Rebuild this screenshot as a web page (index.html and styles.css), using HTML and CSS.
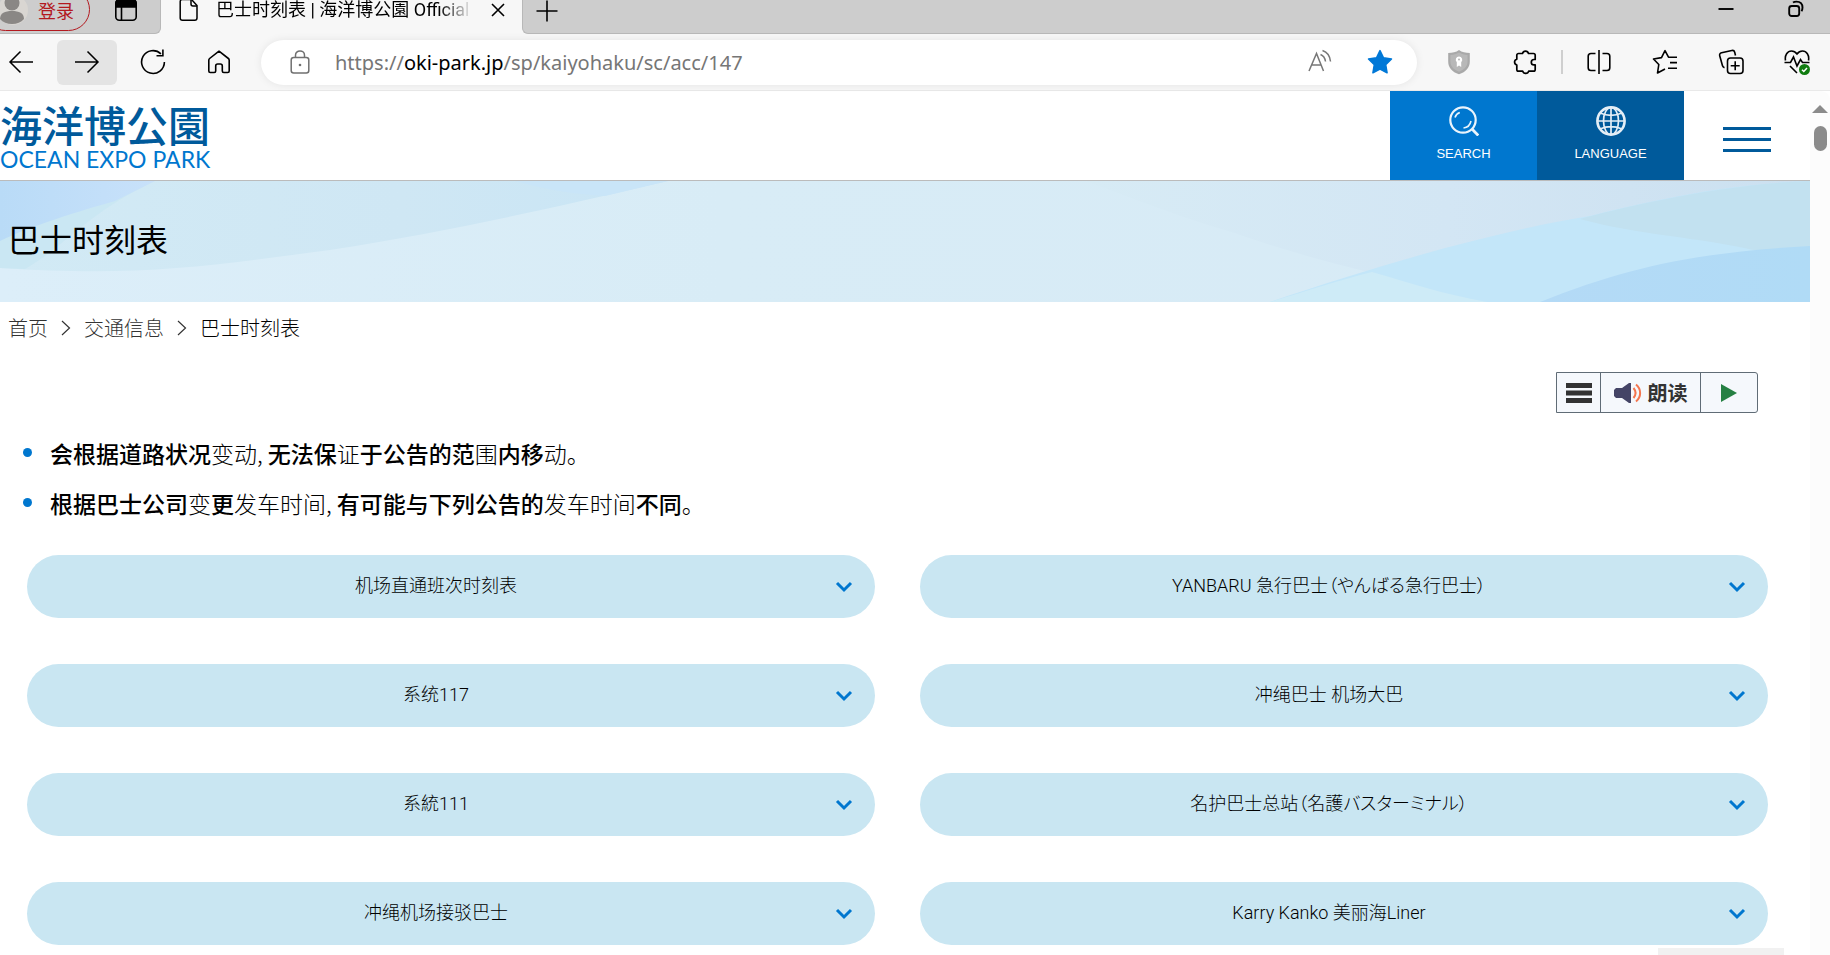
FILE: index.html
```html
<!DOCTYPE html>
<html lang="zh-CN">
<head>
<meta charset="utf-8">
<meta name="viewport" content="width=device-width, initial-scale=1">
<title>巴士时刻表 | 海洋博公園 Official Site</title>
<link rel="stylesheet" href="styles.css">
</head>
<body>
<div class="window">
  <div class="tabstrip">
    <div class="strip-left">
      <button class="profile" type="button">
        <svg class="avatar" viewBox="0 0 30 30" aria-hidden="true"><circle cx="15" cy="15" r="15" fill="#d9d6d2"/><circle cx="14" cy="8" r="7.500" fill="#8a8785"/><path d="M2 24c0-6 5-8 12-8s12 2 12 8c-3 3.500-7 5-12 5s-9-1.500-12-5z" fill="#8a8785"/></svg>
        <span>登录</span>
      </button>
      <button class="icon-btn workspaces" type="button" aria-label="工作区">
        <svg width="24" height="24" viewBox="0 0 24 24" fill="none" stroke="#000" stroke-width="1.600"><rect x="1.800" y="1.800" width="20.400" height="20.400" rx="3.500"/><path d="M2 9V5a3 3 0 0 1 3-3h14a3 3 0 0 1 3 3v4z" fill="#000"/><path d="M7.500 9v13"/></svg>
      </button>
    </div>
    <div class="tab">
      <svg class="doc" width="20" height="24" viewBox="0 0 20 24" fill="none" stroke="#000" stroke-width="1.500"><path d="M4 1.500h8.500l5.500 6V20a2.300 2.300 0 0 1-2.300 2.300H3.500A2.300 2.300 0 0 1 1.200 20V3.500a2 2 0 0 1 2-2z"/><path d="M12 1.500V6a2 2 0 0 0 2 2h4"/></svg>
      <span class="tab-title">巴士时刻表 | 海洋博公園 Official Site</span>
      <button class="icon-btn tab-close" type="button" aria-label="关闭标签页"><svg width="14" height="14" viewBox="0 0 14 14" stroke="#000" stroke-width="1.600"><path d="M1 1l12 12M13 1L1 13"/></svg></button>
    </div>
    <div class="strip-right">
      <button class="icon-btn" type="button" aria-label="新建标签页"><svg width="22" height="22" viewBox="0 0 22 22" stroke="#000" stroke-width="1.600"><path d="M11 0.500v21M0.500 11h21"/></svg></button>
      <div class="controls">
        <button class="icon-btn" type="button" aria-label="最小化"><svg width="16" height="18" viewBox="0 0 16 18" stroke="#000" stroke-width="1.900"><path d="M0.500 9h15"/></svg></button>
        <button class="icon-btn" type="button" aria-label="还原"><svg width="16" height="18" viewBox="0 0 16 18" fill="none" stroke="#000" stroke-width="1.900"><rect x="1.200" y="6" width="10" height="10" rx="2.500"/><path d="M5 2.500C6 1.800 7 1.600 8.500 1.600c4 0 6 2.400 6 6 0 1.500-.3 2.600-1 3.600"/></svg></button>
      </div>
    </div>
  </div>

  <div class="toolbar">
    <div class="nav">
      <button class="icon-btn tool" type="button" aria-label="后退"><svg width="26" height="24" viewBox="0 0 26 24" fill="none" stroke="#000" stroke-width="1.500"><path d="M25 12H2M12.500 1.500L2 12l10.500 10.500"/></svg></button>
      <button class="icon-btn tool active" type="button" aria-label="前进"><svg width="26" height="24" viewBox="0 0 26 24" fill="none" stroke="#000" stroke-width="1.500"><path d="M1 12h23M13.500 1.500L24 12 13.500 22.500"/></svg></button>
      <button class="icon-btn tool" type="button" aria-label="刷新"><svg width="26" height="26" viewBox="0 0 26 26" fill="none" stroke="#000" stroke-width="1.600"><path d="M24.400 13a11.400 11.400 0 1 1-3.500-8.200M16.500 6.700h6.400V.5"/></svg></button>
      <button class="icon-btn tool" type="button" aria-label="主页"><svg width="24" height="24" viewBox="0 0 24 24" fill="none" stroke="#000" stroke-width="1.600" stroke-linejoin="round"><path d="M1.800 10.200c0-.7.300-1.300.8-1.700L12 1.200l9.400 7.300c.5.400.8 1 .8 1.700V21c0 .9-.6 1.500-1.500 1.500h-3.900c-.9 0-1.500-.6-1.500-1.500v-5c0-1.300-1-2-2-2h-2.600c-1 0-2 .7-2 2v5c0 .9-.6 1.500-1.500 1.500H3.300c-.9 0-1.500-.6-1.500-1.500z"/></svg></button>
    </div>
    <div class="address">
      <svg class="lock" width="20" height="24" viewBox="0 0 20 24" fill="none" stroke="#707070" stroke-width="1.500"><rect x="1.200" y="7.500" width="17.600" height="15.500" rx="2.500"/><path d="M5.500 7.500V5.200C5.500 2.700 7.500 1 10 1s4.500 1.700 4.500 4.200v2.300"/><circle cx="10" cy="15" r="1.300" fill="#707070" stroke="none"/></svg>
      <a class="url" href="#">https://<b>oki-park.jp</b>/sp/kaiyohaku/sc/acc/147</a>
      <button class="icon-btn" type="button" aria-label="大声朗读"><svg width="26" height="26" viewBox="0 0 26 26" fill="none" stroke="#777" stroke-width="1.500"><path d="M2 22L9.500 4.500 16.500 22M4.500 16h9.500M13.500 5.500c2.500 1 4.500 3.500 5 7M15.500 1.500c4.500 1.500 7.500 6 8 11"/></svg></button>
      <button class="icon-btn star" type="button" aria-label="收藏"><svg width="26" height="26" viewBox="0 0 26 26" fill="#0078d7" stroke="#0078d7" stroke-width="1.500" stroke-linejoin="round"><path d="M13 1.600l3.500 7.200 8 1.200-5.800 5.600 1.400 8.200L13 20l-7.100 3.800 1.400-8.200L1.500 10l8-1.200z"/></svg></button>
    </div>
    <div class="extensions">
      <button class="icon-btn tool" type="button" aria-label="防护"><svg width="24" height="26" viewBox="0 0 24 26"><path d="M12 1c3 2.200 6.500 3 10.800 3v8.500C22.800 18.500 19 23 12 25.300 5 23 1.200 18.500 1.200 12.500V4C5.500 4 9 3.200 12 1z" fill="#a9a9a9"/><path d="M12 3.500c2.500 1.500 5.200 2.300 8.600 2.500v6.500c0 4.500-3 8-8.600 10.200-5.600-2.200-8.600-5.700-8.600-10.200V6C6.800 5.800 9.500 5 12 3.500z" fill="#b8b8b8"/><path d="M12 7.500a3.300 3.300 0 0 1 2.200 5.700v4.800l-2.200-1.500L9.800 18v-4.800A3.300 3.300 0 0 1 12 7.500z" fill="#fff"/><circle cx="12" cy="10.500" r="1" fill="#b8b8b8"/></svg></button>
      <button class="icon-btn tool" type="button" aria-label="扩展"><svg width="24" height="26" viewBox="0 0 24 26" fill="none" stroke="#000" stroke-width="1.700" stroke-linejoin="round"><path d="M5.500 4.500h4a3.100 3.100 0 0 1 6 0h5a1.700 1.700 0 0 1 1.700 1.700v4.300h-1.200a2.700 2.700 0 0 0 0 5.400h1.200v4.500a1.700 1.700 0 0 1-1.700 1.700h-4.800a3.100 3.100 0 0 1-6 0H5.500A1.700 1.700 0 0 1 3.800 20.400V16a3 3 0 0 1 0-5.800v-4A1.700 1.700 0 0 1 5.500 4.500z"/></svg></button>
      <span class="divider"></span>
      <button class="icon-btn tool" type="button" aria-label="分屏"><svg width="26" height="26" viewBox="0 0 26 26" fill="none" stroke="#000" stroke-width="1.600"><path d="M13 1v24M9.500 4.500H5A2.800 2.800 0 0 0 2.200 7.300v11.400A2.800 2.800 0 0 0 5 21.500h4.500M16.500 4.500H21a2.800 2.800 0 0 1 2.800 2.800v11.400a2.800 2.800 0 0 1-2.800 2.800h-4.500"/></svg></button>
      <button class="icon-btn tool" type="button" aria-label="收藏夹"><svg width="26" height="26" viewBox="0 0 26 26" fill="none" stroke="#000" stroke-width="1.600" stroke-linejoin="round"><path d="M21.500 8.200h-5L13 1.600 9.500 8.600 1.500 10l5.300 5.500L5.500 24l7.500-4M16.500 8.200H25M18 13.600h7M16 19.300h9"/></svg></button>
      <button class="icon-btn tool" type="button" aria-label="集锦"><svg width="26" height="26" viewBox="0 0 26 26" fill="none" stroke="#000" stroke-width="1.600"><rect x="9.500" y="9" width="15.500" height="15.500" rx="3"/><path d="M17.200 12.300v9M12.700 16.800h9M17.500 6.500l-.8-3.300c-.4-1.500-1.500-2-2.900-1.700L3.600 3.800C2 4.200 1.300 5.300 1.700 6.800l2.800 10c.3 1 .9 1.600 2 1.900"/></svg></button>
      <button class="icon-btn tool" type="button" aria-label="浏览器概要"><svg width="26" height="26" viewBox="0 0 26 26" fill="none" stroke="#000" stroke-width="1.600"><path d="M1.500 11.500C.5 6 3.500 2 7.500 2c2.500 0 4 1 5.500 3 1.500-2 3-3 5.500-3 4 0 7 4 6 9.500M0.500 13.500h6L9.500 8l3.500 9 3.500-6.500 2 3h7M6 17l7 7"/><circle cx="20.500" cy="20.500" r="5.500" fill="#107c10" stroke="none"/><path d="M18 20.700l1.800 1.800 3.200-3.500" stroke="#fff" stroke-width="1.500"/></svg></button>
    </div>
  </div>

  <div class="viewport">
    <div class="page">
      <header class="site-header">
        <a class="logo" href="#"><span class="logo-ja" lang="ja">海洋博公園</span><span class="logo-en">OCEAN EXPO PARK</span></a>
        <div class="header-actions">
          <button class="action search" type="button">
            <svg width="30" height="30" viewBox="0 0 30 30" fill="none" stroke="#eaf4fc" stroke-width="2.200"><circle cx="14" cy="14" r="12.700"/><path d="M23 23l6.300 6.500" stroke-width="2.800"/><path d="M6 11.500c.8-2.500 2.500-4.200 4.800-5M22 15c-.8 3.800-3.500 6.500-7.500 7" stroke-width="1.600"/></svg>
            <span>SEARCH</span>
          </button>
          <button class="action language" type="button">
            <svg width="30" height="30" viewBox="0 0 30 30" fill="none" stroke="#e4eef6" stroke-width="1.700"><circle cx="15" cy="15" r="13.600" stroke-width="2.600"/><ellipse cx="15" cy="15" rx="7.500" ry="13.500"/><path d="M15 1v28M1 15h28M4 7c7 3 15 3 22 0M4 23c7-3 15-3 22 0"/></svg>
            <span>LANGUAGE</span>
          </button>
          <button class="menu" type="button" aria-label="菜单"><span></span><span></span><span></span></button>
        </div>
      </header>

      <div class="banner">
        <svg class="waves" viewBox="0 0 1810 121" preserveAspectRatio="none" aria-hidden="true">
          <defs>
            <linearGradient id="base"><stop offset="0" stop-color="#dceef9"/><stop offset=".4" stop-color="#d8ecf6"/><stop offset="1" stop-color="#d7eaf6"/></linearGradient>
            <linearGradient id="left"><stop offset="0" stop-color="#d2eaf5"/><stop offset=".6" stop-color="#cfe7f4"/><stop offset="1" stop-color="#c9e5f5"/></linearGradient>
            <linearGradient id="corner"><stop offset="0" stop-color="#b9dbf7"/><stop offset="1" stop-color="#c8e1fa"/></linearGradient>
            <linearGradient id="haze"><stop offset="0" stop-color="#d7ebf5"/><stop offset=".5" stop-color="#d3e6f4"/><stop offset="1" stop-color="#cbe0f0"/></linearGradient>
            <linearGradient id="deep"><stop offset="0" stop-color="#b4daf6"/><stop offset="1" stop-color="#b0dbf6"/></linearGradient>
          </defs>
          <path fill="url(#base)" d="M0 0h1810v121H0z"/>
          <path fill="url(#left)" d="M0 87C140 96 210 85 330 69 450 50 540 30 668 0H0z"/>
          <path fill="#c9e5f8" d="M515 0h153l-63 15C570 13 540 7 515 0z"/>
          <path fill="#cae7f3" d="M0 87l25 1C65 65 90 30 155 0H0z"/>
          <path fill="url(#corner)" d="M0 60C30 45 80 30 115 20L155 0H0z"/>
          <path fill="url(#haze)" d="M1085 0c50 18 100 38 150 52 50 18 90 28 137 40C1500 60 1700 20 1810 0z"/>
          <path fill="#c3e6f9" d="M1270 121c100-34 220-70 320-86 70-18 140-32 220-35v121z"/>
          <path fill="#ceebf7" d="M1270 121c40-12 70-22 102-30 35 10 70 22 115 30z"/>
          <path fill="#c2e1f0" d="M1580 38c40-11 140-35 230-38v66l-52 4c-60-14-120-16-178-32z"/>
          <path fill="url(#deep)" d="M1540 121c90-36 160-50 270-56v56z"/>
        </svg>
        <h1>巴士时刻表</h1>
      </div>

      <nav class="crumbs" aria-label="面包屑">
        <a href="#">首页</a>
        <svg width="10" height="18" viewBox="0 0 10 18" fill="none" stroke="#333" stroke-width="1.200"><path d="M1 2l7.500 7L1 16"/></svg>
        <a href="#">交通信息</a>
        <svg width="10" height="18" viewBox="0 0 10 18" fill="none" stroke="#333" stroke-width="1.200"><path d="M1 2l7.500 7L1 16"/></svg>
        <span>巴士时刻表</span>
      </nav>

      <div class="reader-row">
        <div class="reader">
          <button class="reader-menu" type="button" aria-label="朗读菜单"><svg width="26" height="20" viewBox="0 0 26 20"><path d="M0 0h26v5H0zM0 7.500h26v5H0zM0 15h26v5H0z" fill="#333"/></svg></button>
          <button class="reader-listen" type="button"><svg width="28" height="24" viewBox="0 0 28 24" fill="none"><path d="M2 7h6l7-5h2v20h-2l-7-5H2l-2-2V9z" fill="#444466"/><path d="M19.500 7c2.500 3 2.500 7 0 10M22 3.500c5.500 4.500 5.500 12.500 0 17" stroke="#f4764f" stroke-width="2"/></svg><span>朗读</span></button>
          <button class="reader-play" type="button" aria-label="播放"><svg width="16" height="18" viewBox="0 0 16 18"><path d="M0 0l16 9-16 9z" fill="#258043"/></svg></button>
        </div>
      </div>

      <ul class="notes">
        <li>会根据道路状况<span>变动, </span>无法保<span>证</span>于公告的范<span>围</span>内移<span>动。</span></li>
        <li>根据巴士公司<span>变</span>更<span>发车时间, </span>有可能与下列公告的<span>发车时间</span>不同<span>。</span></li>
      </ul>

      <div class="routes">
        <button class="route" type="button"><span>机场直通班次时刻表</span><svg class="chev" viewBox="0 0 18 12"><path d="M2 2l7 7 7-7"/></svg></button>
        <button class="route" type="button"><span lang="ja">YANBARU 急行巴士（やんばる急行巴士）</span><svg class="chev" viewBox="0 0 18 12"><path d="M2 2l7 7 7-7"/></svg></button>
        <button class="route" type="button"><span>系统117</span><svg class="chev" viewBox="0 0 18 12"><path d="M2 2l7 7 7-7"/></svg></button>
        <button class="route" type="button"><span>冲绳巴士 机场大巴</span><svg class="chev" viewBox="0 0 18 12"><path d="M2 2l7 7 7-7"/></svg></button>
        <button class="route" type="button"><span>系統111</span><svg class="chev" viewBox="0 0 18 12"><path d="M2 2l7 7 7-7"/></svg></button>
        <button class="route" type="button"><span lang="ja">名护巴士总站（名護バスターミナル）</span><svg class="chev" viewBox="0 0 18 12"><path d="M2 2l7 7 7-7"/></svg></button>
        <button class="route" type="button"><span>冲绳机场接驳巴士</span><svg class="chev" viewBox="0 0 18 12"><path d="M2 2l7 7 7-7"/></svg></button>
        <button class="route" type="button"><span>Karry Kanko 美丽海Liner</span><svg class="chev" viewBox="0 0 18 12"><path d="M2 2l7 7 7-7"/></svg></button>
      </div>
      <div class="page-top"></div>
    </div>
    <div class="scrollbar" aria-hidden="true"><svg width="16" height="8" viewBox="0 0 16 8"><path d="M8 0l8 8H0z" fill="#8b8b8b"/></svg><span class="thumb"></span></div>
  </div>
</div>
</body>
</html>
```

FILE: styles.css
```css
* {
  box-sizing: border-box;
}

body {
  margin: 0;
  background: #fff;
  color: #000;
  font-family: "Liberation Sans", "Noto Sans CJK SC", sans-serif;
}

button {
  margin: 0;
  padding: 0;
  border: 0;
  background: none;
  color: inherit;
  font: inherit;
}

svg {
  display: block;
  flex: none;
}

a {
  color: inherit;
  text-decoration: none;
}

.window {
  display: flex;
  flex-direction: column;
  min-height: 100vh;
  overflow: hidden;
}

.icon-btn {
  display: flex;
  flex: none;
  align-items: center;
  justify-content: center;
}

/* Tab strip */
.tabstrip {
  display: flex;
  height: 34px;
  background: #f7f7f7;
}

.strip-left,
.strip-right {
  display: flex;
  align-items: flex-start;
  background: #cdcdcd;
  border-bottom: 1px solid #b8b8b8;
}

.strip-left {
  width: 161px;
  border-right: 1px solid #b8b8b8;
  border-bottom-right-radius: 6px;
}

.strip-right {
  flex: 1;
  justify-content: space-between;
  padding-left: 13px;
  border-left: 1px solid #b8b8b8;
  border-bottom-left-radius: 6px;
}

.profile {
  display: flex;
  flex: none;
  align-items: center;
  gap: 10px;
  width: 106px;
  height: 43px;
  margin: -12px 0 0 -16px;
  padding-left: 13px;
  border: 1px solid #b3191f;
  border-radius: 22px;
  color: #b3191f;
  font: 400 18px/18px "Noto Sans CJK SC", sans-serif;
}

.avatar {
  width: 30px;
  height: 30px;
}

.workspaces {
  margin: -2px 0 0 24px;
}

.tab {
  display: flex;
  align-items: center;
  width: 361px;
  height: 20px;
  padding: 0 17px 0 18px;
}

.tab-title {
  flex: 1;
  margin: 0 16px 0 17px;
  overflow: hidden;
  font: 400 18px/20px Roboto, "Noto Sans CJK JP", sans-serif;
  white-space: nowrap;
  mask-image: linear-gradient(to right, #000 86%, transparent 99%);
}

.controls {
  display: flex;
  gap: 54px;
  padding-right: 26px;
}

/* Toolbar */
.toolbar {
  display: flex;
  align-items: center;
  gap: 12px;
  height: 57px;
  padding-right: 3px;
  background: #f7f7f7;
  border-bottom: 1px solid #e9e9e9;
}

.nav,
.extensions {
  display: flex;
  align-items: center;
  gap: 6px;
}

.nav {
  margin-left: -9px;
}

.tool {
  width: 60px;
  height: 45px;
  border-radius: 6px;
}

.active {
  background: #e4e4e4;
}

.address {
  display: flex;
  flex: 1;
  align-items: center;
  height: 45px;
  padding: 0 24px 0 29px;
  border-radius: 23px;
  background: #fff;
  box-shadow: 0 0 8px rgba(0, 0, 0, 0.08);
}

.url {
  flex: 1;
  margin-left: 25px;
  color: #767676;
  font: 20px "Noto Sans", sans-serif;
}

.url b {
  color: #000;
  font-weight: 400;
}

.star {
  margin-left: 34px;
}

.divider {
  width: 2px;
  height: 24px;
  background: #cfcfcf;
}

/* Page */
.viewport {
  display: flex;
  flex: 1;
}

.page {
  position: relative;
  flex: 1;
  min-width: 0;
}

.site-header {
  display: flex;
  justify-content: space-between;
  height: 90px;
  border-bottom: 1px solid #bbb;
}

.logo {
  display: flex;
  flex-direction: column;
  padding-top: 12px;
}

.logo-ja {
  color: #005a9b;
  font: 500 42px/42px "Noto Sans CJK JP", sans-serif;
}

.logo-en {
  color: #0077cf;
  font: 400 23px/28px Lato, sans-serif;
  white-space: nowrap;
}

.header-actions {
  display: flex;
}

.action {
  display: flex;
  flex-direction: column;
  align-items: center;
  gap: 10px;
  width: 147px;
  padding-top: 15px;
  color: #fff;
  font: 13px/16px "Liberation Sans", sans-serif;
}

.search {
  background: #0077cf;
}

.language {
  background: #005a9b;
}

.menu {
  display: flex;
  flex-direction: column;
  align-items: center;
  gap: 8px;
  width: 126px;
  padding-top: 36px;
}

.menu span {
  width: 48px;
  height: 3px;
  background: #005a9b;
}

.banner {
  position: relative;
  display: flex;
  align-items: center;
  height: 121px;
  padding: 0 8px 8px;
}

.waves {
  position: absolute;
  inset: 0;
  width: 100%;
  height: 100%;
}

h1 {
  position: relative;
  margin: 0;
  font: 32px/48px "Noto Sans CJK SC", sans-serif;
}

.crumbs {
  display: flex;
  align-items: center;
  gap: 13px;
  padding: 11px 8px 0;
  font: 300 20px/30px "Noto Sans CJK SC", sans-serif;
}

.crumbs a {
  color: #333;
}

.reader-row {
  display: flex;
  justify-content: flex-end;
  padding: 29px 52px 0 0;
}

.reader {
  display: flex;
  height: 41px;
  border: 1px solid #606c76;
  border-radius: 0 3px 3px 0;
  background: #f5f8fc;
}

.reader button {
  display: flex;
  align-items: center;
  justify-content: center;
  gap: 6px;
}

.reader-menu {
  width: 43px;
}

.reader .reader-listen {
  width: 101px;
  border: 1px solid #606c76;
  border-width: 0 1px;
  color: #333;
  font: 700 20px "Noto Sans CJK SC", sans-serif;
}

.reader-play {
  width: 56px;
}

.notes {
  margin: 0;
  padding: 15px 50px 2px;
  list-style: none;
  font: 500 23px/50px "Noto Sans CJK SC", sans-serif;
}

.notes li {
  position: relative;
}

.notes li::before {
  content: "";
  position: absolute;
  top: 20px;
  left: -27px;
  width: 9px;
  height: 9px;
  border-radius: 50%;
  background: #0077cf;
}

.notes span {
  font-weight: 300;
}

.routes {
  display: grid;
  grid-template-columns: 1fr 1fr;
  gap: 46px 45px;
  padding: 25px 42px 10px 27px;
}

.route {
  display: flex;
  align-items: center;
  height: 63px;
  padding: 0 22px 0 10px;
  border-radius: 32px;
  background: #c9e6f2;
  font: 300 18px/26px Roboto, "Noto Sans CJK SC", sans-serif;
}

.route span {
  flex: 1;
  padding-bottom: 1px;
  font-feature-settings: "palt";
}

.chev {
  width: 18px;
  height: 12px;
  fill: none;
  stroke: #0077cf;
  stroke-width: 3;
}

.page-top {
  position: absolute;
  right: 26px;
  bottom: 0;
  width: 126px;
  height: 7px;
  background: #f1f1f1;
}

.scrollbar {
  display: flex;
  flex-direction: column;
  align-items: center;
  gap: 13px;
  width: 20px;
  padding-top: 14px;
  background: #fcfcfc;
  border-top-right-radius: 9px;
}

.thumb {
  width: 13px;
  height: 25px;
  border-radius: 7px;
  background: #8b8b8b;
}
```
